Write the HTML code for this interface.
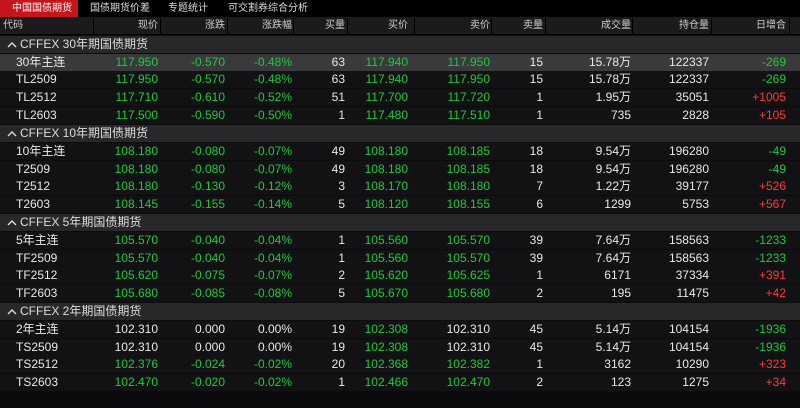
<!DOCTYPE html>
<html><head><meta charset="utf-8"><style>
*{margin:0;padding:0;box-sizing:border-box}
body{width:800px;height:408px;background:#0b0b0d;font-family:"Liberation Sans","Noto Sans CJK SC",sans-serif;color:#e8e8e8;position:relative;overflow:hidden}
.tabs{position:absolute;left:0;top:0;width:800px;height:17px;background:#000;font-size:10px}
.tab{position:absolute;top:0;height:17px;line-height:17px;color:#ddd}
.tab.on{background:#c4161c;color:#fff;left:0;width:78px;padding-left:12px}
.hdr{position:absolute;top:17px;left:0;width:800px;height:18px;background:#1b1b1d;font-size:10px;color:#ccc;border-bottom:1px solid #000}
.hdr span{position:absolute;top:0;line-height:18px}
.sep{position:absolute;top:1px;width:1px;height:16px;background:#000}
.r{position:absolute;left:0;width:800px;height:17px;background:#121214;font-size:12px;line-height:17px}
.g{background:#28282b;font-size:12px;color:#ddd}
.hl{background:#3a3a3d}
.r span{position:absolute;top:0;white-space:nowrap}
.r svg{position:absolute;left:7px;top:5px}
.c0{left:16px}
.r span.gt{left:20px}
.G{color:#22c83e}.R{color:#ff3a3a}
.r span.a{right:642px}.r span.b{right:575px}.r span.c{right:508px}.r span.d{right:455px}.r span.e{right:392px}.r span.f{right:310px}.r span.h{right:257px}.r span.i{right:169px}.r span.j{right:91px}.r span.k{right:14px}
</style></head><body>
<div class="tabs">
<div class="tab on">中国国债期货</div>
<div class="tab" style="left:90px">国债期货价差</div>
<div class="tab" style="left:168px">专题统计</div>
<div class="tab" style="left:228px">可交割券综合分析</div>
</div>
<div class="hdr">
<span style="left:3px">代码</span>
<span style="right:642px">现价</span><span style="right:575px">涨跌</span><span style="right:508px">涨跌幅</span><span style="right:455px">买量</span><span style="right:392px">买价</span><span style="right:310px">卖价</span><span style="right:257px">卖量</span><span style="right:169px">成交量</span><span style="right:91px">持仓量</span><span style="right:14px">日增合</span>
<div class="sep" style="left:93px"></div><div class="sep" style="left:160px"></div><div class="sep" style="left:227px"></div><div class="sep" style="left:293px"></div><div class="sep" style="left:347px"></div><div class="sep" style="left:414px"></div><div class="sep" style="left:491px"></div><div class="sep" style="left:545px"></div><div class="sep" style="left:632px"></div><div class="sep" style="left:711px"></div><div class="sep" style="left:789px"></div>
</div>
<div class="r g" style="top:36px"><svg width="10" height="7" viewBox="0 0 10 7"><path d="M1 6 L5 2 L9 6" stroke="#ddd" stroke-width="1.4" fill="none"/></svg><span class="gt">CFFEX 30年期国债期货</span></div>
<div class="r hl" style="top:54px"><span class="c0">30年主连</span><span class="a G">117.950</span><span class="b G">-0.570</span><span class="c G">-0.48%</span><span class="d">63</span><span class="e G">117.940</span><span class="f G">117.950</span><span class="h">15</span><span class="i">15.78万</span><span class="j">122337</span><span class="k G">-269</span></div>
<div class="r" style="top:71px"><span class="c0">TL2509</span><span class="a G">117.950</span><span class="b G">-0.570</span><span class="c G">-0.48%</span><span class="d">63</span><span class="e G">117.940</span><span class="f G">117.950</span><span class="h">15</span><span class="i">15.78万</span><span class="j">122337</span><span class="k G">-269</span></div>
<div class="r" style="top:89px"><span class="c0">TL2512</span><span class="a G">117.710</span><span class="b G">-0.610</span><span class="c G">-0.52%</span><span class="d">51</span><span class="e G">117.700</span><span class="f G">117.720</span><span class="h">1</span><span class="i">1.95万</span><span class="j">35051</span><span class="k R">+1005</span></div>
<div class="r" style="top:107px"><span class="c0">TL2603</span><span class="a G">117.500</span><span class="b G">-0.590</span><span class="c G">-0.50%</span><span class="d">1</span><span class="e G">117.480</span><span class="f G">117.510</span><span class="h">1</span><span class="i">735</span><span class="j">2828</span><span class="k R">+105</span></div>
<div class="r g" style="top:125px"><svg width="10" height="7" viewBox="0 0 10 7"><path d="M1 6 L5 2 L9 6" stroke="#ddd" stroke-width="1.4" fill="none"/></svg><span class="gt">CFFEX 10年期国债期货</span></div>
<div class="r" style="top:143px"><span class="c0">10年主连</span><span class="a G">108.180</span><span class="b G">-0.080</span><span class="c G">-0.07%</span><span class="d">49</span><span class="e G">108.180</span><span class="f G">108.185</span><span class="h">18</span><span class="i">9.54万</span><span class="j">196280</span><span class="k G">-49</span></div>
<div class="r" style="top:161px"><span class="c0">T2509</span><span class="a G">108.180</span><span class="b G">-0.080</span><span class="c G">-0.07%</span><span class="d">49</span><span class="e G">108.180</span><span class="f G">108.185</span><span class="h">18</span><span class="i">9.54万</span><span class="j">196280</span><span class="k G">-49</span></div>
<div class="r" style="top:178px"><span class="c0">T2512</span><span class="a G">108.180</span><span class="b G">-0.130</span><span class="c G">-0.12%</span><span class="d">3</span><span class="e G">108.170</span><span class="f G">108.180</span><span class="h">7</span><span class="i">1.22万</span><span class="j">39177</span><span class="k R">+526</span></div>
<div class="r" style="top:196px"><span class="c0">T2603</span><span class="a G">108.145</span><span class="b G">-0.155</span><span class="c G">-0.14%</span><span class="d">5</span><span class="e G">108.120</span><span class="f G">108.155</span><span class="h">6</span><span class="i">1299</span><span class="j">5753</span><span class="k R">+567</span></div>
<div class="r g" style="top:214px"><svg width="10" height="7" viewBox="0 0 10 7"><path d="M1 6 L5 2 L9 6" stroke="#ddd" stroke-width="1.4" fill="none"/></svg><span class="gt">CFFEX 5年期国债期货</span></div>
<div class="r" style="top:232px"><span class="c0">5年主连</span><span class="a G">105.570</span><span class="b G">-0.040</span><span class="c G">-0.04%</span><span class="d">1</span><span class="e G">105.560</span><span class="f G">105.570</span><span class="h">39</span><span class="i">7.64万</span><span class="j">158563</span><span class="k G">-1233</span></div>
<div class="r" style="top:250px"><span class="c0">TF2509</span><span class="a G">105.570</span><span class="b G">-0.040</span><span class="c G">-0.04%</span><span class="d">1</span><span class="e G">105.560</span><span class="f G">105.570</span><span class="h">39</span><span class="i">7.64万</span><span class="j">158563</span><span class="k G">-1233</span></div>
<div class="r" style="top:267px"><span class="c0">TF2512</span><span class="a G">105.620</span><span class="b G">-0.075</span><span class="c G">-0.07%</span><span class="d">2</span><span class="e G">105.620</span><span class="f G">105.625</span><span class="h">1</span><span class="i">6171</span><span class="j">37334</span><span class="k R">+391</span></div>
<div class="r" style="top:285px"><span class="c0">TF2603</span><span class="a G">105.680</span><span class="b G">-0.085</span><span class="c G">-0.08%</span><span class="d">5</span><span class="e G">105.670</span><span class="f G">105.680</span><span class="h">2</span><span class="i">195</span><span class="j">11475</span><span class="k R">+42</span></div>
<div class="r g" style="top:303px"><svg width="10" height="7" viewBox="0 0 10 7"><path d="M1 6 L5 2 L9 6" stroke="#ddd" stroke-width="1.4" fill="none"/></svg><span class="gt">CFFEX 2年期国债期货</span></div>
<div class="r" style="top:321px"><span class="c0">2年主连</span><span class="a">102.310</span><span class="b">0.000</span><span class="c">0.00%</span><span class="d">19</span><span class="e G">102.308</span><span class="f">102.310</span><span class="h">45</span><span class="i">5.14万</span><span class="j">104154</span><span class="k G">-1936</span></div>
<div class="r" style="top:339px"><span class="c0">TS2509</span><span class="a">102.310</span><span class="b">0.000</span><span class="c">0.00%</span><span class="d">19</span><span class="e G">102.308</span><span class="f">102.310</span><span class="h">45</span><span class="i">5.14万</span><span class="j">104154</span><span class="k G">-1936</span></div>
<div class="r" style="top:356px"><span class="c0">TS2512</span><span class="a G">102.376</span><span class="b G">-0.024</span><span class="c G">-0.02%</span><span class="d">20</span><span class="e G">102.368</span><span class="f G">102.382</span><span class="h">1</span><span class="i">3162</span><span class="j">10290</span><span class="k R">+323</span></div>
<div class="r" style="top:374px"><span class="c0">TS2603</span><span class="a G">102.470</span><span class="b G">-0.020</span><span class="c G">-0.02%</span><span class="d">1</span><span class="e G">102.466</span><span class="f G">102.470</span><span class="h">2</span><span class="i">123</span><span class="j">1275</span><span class="k R">+34</span></div>
</body></html>
